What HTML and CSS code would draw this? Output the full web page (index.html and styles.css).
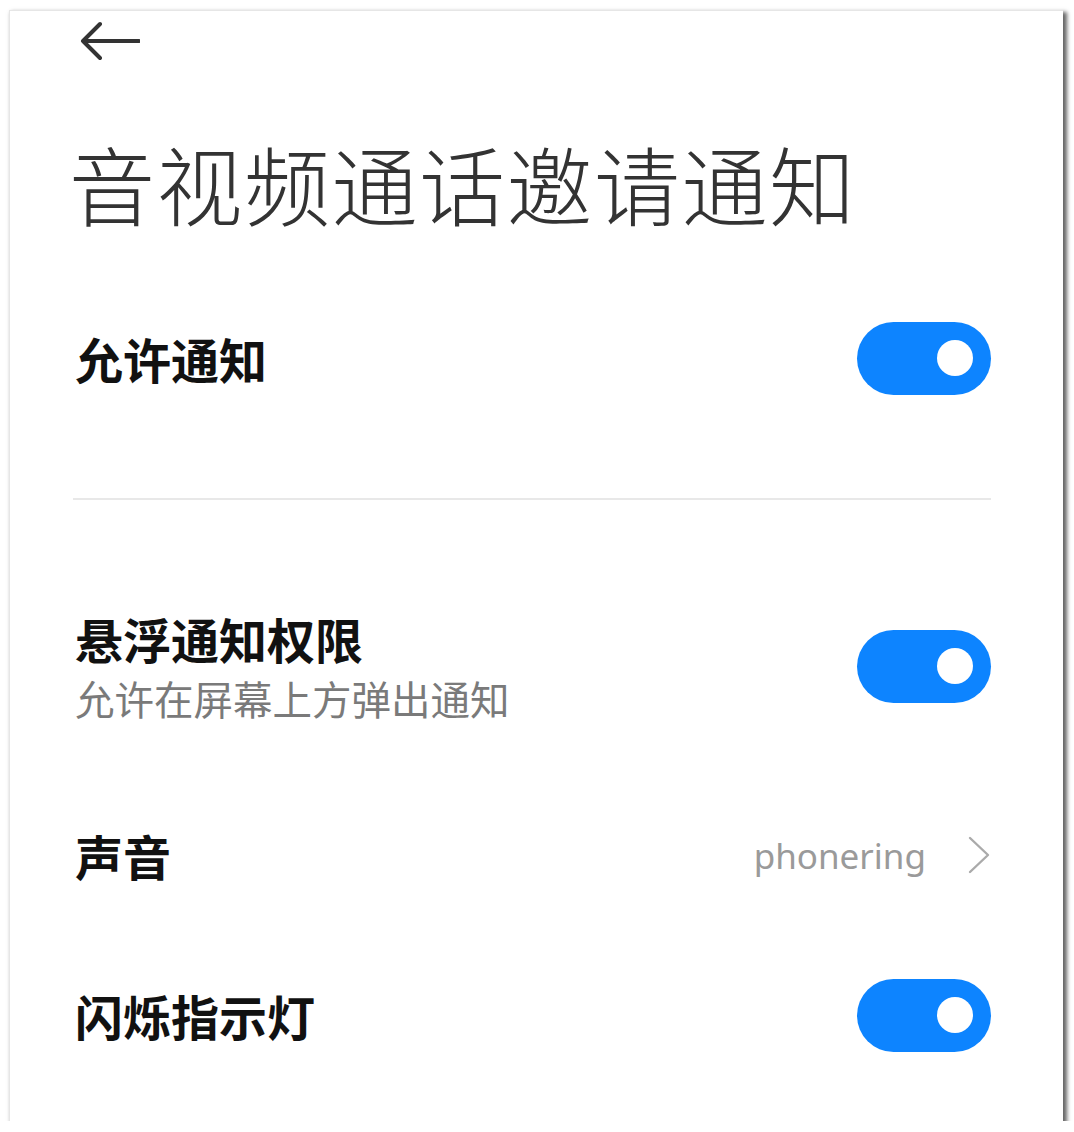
FILE: index.html
```html
<!DOCTYPE html>
<html lang="zh-CN">
<head>
<meta charset="utf-8">
<title>音视频通话邀请通知</title>
<link rel="stylesheet" href="styles.css">
</head>
<body>
<div class="card">
  <div class="header">
    <svg class="back" width="64" height="44" viewBox="0 0 64 44">
      <path d="M24 5 L7 22 L24 39 M7 22 L63 22" fill="none" stroke="#333" stroke-width="4" stroke-linecap="round" stroke-linejoin="round"/>
    </svg>
  </div>
  <h1 class="title">音视频通话邀请通知</h1>
  <div class="row row-allow">
    <div class="label">允许通知</div>
    <div class="switch"><span class="knob"></span></div>
  </div>
  <div class="divider"></div>
  <div class="row row-float">
    <div class="texts">
      <div class="label">悬浮通知权限</div>
      <div class="sub">允许在屏幕上方弹出通知</div>
    </div>
    <div class="switch"><span class="knob"></span></div>
  </div>
  <div class="row row-sound">
    <div class="label">声音</div>
    <div class="value">
      <span class="value-text">phonering</span>
      <svg class="chev" width="22" height="38" viewBox="0 0 22 38">
        <path d="M2 2 L20 19 L2 36" fill="none" stroke="#aaa" stroke-width="2.4" stroke-linecap="round" stroke-linejoin="round"/>
      </svg>
    </div>
  </div>
  <div class="row row-led">
    <div class="label">闪烁指示灯</div>
    <div class="switch"><span class="knob"></span></div>
  </div>
</div>
</body>
</html>
```
FILE: styles.css
```css
html, body {
  margin: 0;
  padding: 0;
  background: #ffffff;
}
body {
  font-family: "Noto Sans CJK SC", "Noto Sans", sans-serif;
}
.card {
  box-sizing: border-box;
  margin: 10px 0 0 9px;
  width: 1054px;
  height: 1111px;
  background: #fff;
  border-top: 1px solid #e6e6e6;
  border-left: 1px solid #e6e6e6;
  box-shadow: 3px 3px 4px 1px rgba(0, 0, 0, 0.6);
  padding: 0 72px 0 63px;
  display: flex;
  flex-direction: column;
}
.header {
  height: 59px;
  display: flex;
  align-items: center;
}
.back {
  display: block;
  margin-left: 3px;
}
.title {
  margin: 70px 0 0 -4px;
  font-size: 86px;
  line-height: 86px;
  height: 86px;
  font-weight: 300;
  color: #333;
  letter-spacing: 1.5px;
  white-space: nowrap;
}
.row {
  display: flex;
  align-items: center;
  justify-content: space-between;
}
.row-allow {
  margin-top: 74px;
  height: 116px;
}
.label {
  font-size: 48px;
  line-height: 58px;
  font-weight: 700;
  color: #111;
  padding-left: 2px;
}
.divider {
  margin-top: 82px;
  height: 2px;
  background: #e8e8e8;
}
.row-float {
  margin-top: 106px;
  height: 120px;
}
.texts {
  display: flex;
  flex-direction: column;
}
.sub {
  font-size: 39.5px;
  line-height: 50px;
  color: #7a7a7a;
  padding-left: 2px;
  margin-top: 6px;
}
.row-sound {
  margin-top: 69px;
  height: 120px;
}
.row-led {
  margin-top: 40px;
  height: 120px;
}
.switch {
  width: 134px;
  height: 73px;
  border-radius: 37px;
  background: #0d84ff;
  display: flex;
  align-items: center;
  justify-content: flex-end;
  padding-right: 18px;
  box-sizing: border-box;
  flex: none;
}
.knob {
  width: 36px;
  height: 36px;
  border-radius: 50%;
  background: #fff;
}
.value {
  display: flex;
  align-items: center;
}
.value-text {
  font-family: "Noto Sans", sans-serif;
  font-size: 35px;
  color: #9a9a9a;
}
.chev {
  display: block;
  margin-left: 42px;
  margin-right: 1px;
}
```
